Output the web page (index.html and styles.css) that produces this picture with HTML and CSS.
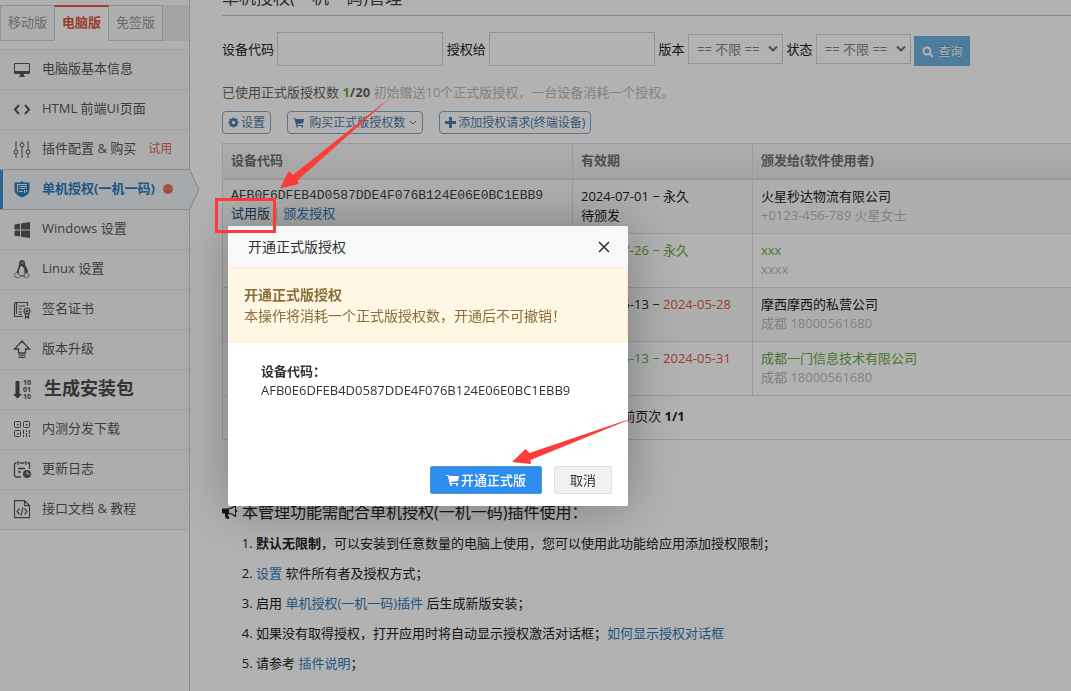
FILE: index.html
```html
<!DOCTYPE html>
<html lang="zh-CN">
<head>
<meta charset="utf-8">
<title>单机授权(一机一码)管理</title>
<link rel="stylesheet" href="styles.css">
</head>
<body>
<div class="page">
  <aside class="sidebar">
    <nav class="tabs">
      <a class="tab" href="#">移动版</a>
      <a class="tab tab-active" href="#">电脑版</a>
      <a class="tab" href="#">免签版</a>
    </nav>
    <ul class="menu">
      <li class="menu-item"><a class="menu-link" href="#">
        <svg class="menu-icon" viewBox="0 0 18 18"><path fill="currentColor" fill-rule="evenodd" d="M2 3h14a1 1 0 0 1 1 1v9a1 1 0 0 1-1 1h-5v2h1v1H6v-1h1v-2H2a1 1 0 0 1-1-1V4a1 1 0 0 1 1-1zm0 1v7h14V4z"/></svg>
        <span>电脑版基本信息</span></a></li>
      <li class="menu-item"><a class="menu-link" href="#">
        <svg class="menu-icon" viewBox="0 0 18 18"><path fill="none" stroke="currentColor" stroke-width="2" d="M6 5L2 9.500l4 4.500M12 5l4 4.500L12 14"/></svg>
        <span>HTML 前端UI页面</span></a></li>
      <li class="menu-item"><a class="menu-link" href="#">
        <svg class="menu-icon" viewBox="0 0 18 18"><g fill="none" stroke="currentColor"><path d="M3 1v9M3 14v4M9 1v2M9 7v11M15 1v9M15 14v4"/><circle cx="3" cy="12" r="2"/><circle cx="9" cy="5" r="2"/><circle cx="15" cy="12" r="2"/></g></svg>
        <span>插件配置 &amp; 购买</span><span class="trial">试用</span></a></li>
      <li class="menu-item menu-active"><a class="menu-link" href="#">
        <svg class="menu-icon" viewBox="0 0 18 18"><path fill="currentColor" d="M9 1l2 1.500h5.500V10c0 3-2.500 5.500-7.500 7.500-5-2-7.500-4.500-7.500-7.500V2.500H7z"/><path fill="none" stroke="#eef4f8" d="M4 4.500h9.500M4.500 5V12.500M6.500 6.500h5.500M6.500 8.500H12M6 11.500h4M13 4.500v4M11.500 10v3M13.500 10v2"/></svg>
        <span>单机授权(一机一码)</span><i class="dot"></i></a>
        <svg class="menu-pointer" viewBox="0 0 11 41"><path class="pointer-shape" d="M0 0.500h.5L10 20.500.5 40.500H0"/></svg></li>
      <li class="menu-item"><a class="menu-link" href="#">
        <svg class="menu-icon" viewBox="0 0 18 18"><path fill="currentColor" d="M1.500 4.500l5.500-.9V9.500H1.500zM8 3.400L17 2v7.500H8zM1.500 10.500H7v6l-5.500-.8zM8 10.500h9V18l-9-1.300z"/></svg>
        <span>Windows 设置</span></a></li>
      <li class="menu-item"><a class="menu-link" href="#">
        <svg class="menu-icon" viewBox="0 0 18 18"><path fill="currentColor" d="M9 0c2.200 0 3 1.600 3 4 0 2 3 4.500 3 8l-1.500 2-2-1-.5 3.500H7.500l-1-3.500-1.500.5H3.500c0-3 2.500-6 2.500-9.500 0-2.400.8-4 3-4z"/><path class="cutout" d="M8.500 6c1 0 3 2 3 5.500 0 2.500-1 4-2.500 4s-3-1.500-3-4S7.500 6 8.500 6z"/><path class="cutout-outline" d="M3.500 12.500L1 15l1 2 4 .8 1.500-1.800zM13.500 13l3.500 2.500-3.500 2.300-2-.8v-3z"/><path stroke="#f8f8f8" d="M7.500 3h1M9.500 3h1"/></svg>
        <span>Linux 设置</span></a></li>
      <li class="menu-item"><a class="menu-link" href="#">
        <svg class="menu-icon" viewBox="0 0 18 18"><g fill="none" stroke="currentColor" stroke-width="1.200"><path d="M14.500 6V2.500h-11Q1.500 2 1.500 4v12.500h8.500M3.500 2.500V14M5.500 6h6.500M5.500 9H9M5.500 12H9M5.500 14.500H9"/><circle cx="14" cy="11" r="3"/><circle cx="14" cy="11" r="1"/><path d="M12.500 13.500V18l1.500-1.500 1.500 1.500v-4.500"/></g></svg>
        <span>签名证书</span></a></li>
      <li class="menu-item"><a class="menu-link" href="#">
        <svg class="menu-icon" viewBox="0 0 18 18"><path fill="none" stroke="currentColor" stroke-width="1.300" d="M9 1L1.500 9H5.500v4h7V9h4zM5.500 15.200h7M5.500 17.300h7"/></svg>
        <span>版本升级</span></a></li>
      <li class="menu-item menu-build"><a class="menu-link" href="#">
        <svg class="menu-icon" viewBox="0 0 18 18"><path fill="currentColor" d="M2.500 1h4v13H9l-4.500 4.500L0 14h2.500z"/><g class="binary"><text x="10" y="5">10</text><text x="10" y="12">01</text><text x="10" y="19">10</text></g></svg>
        <span>生成安装包</span></a></li>
      <li class="menu-item"><a class="menu-link" href="#">
        <svg class="menu-icon" viewBox="0 0 18 18"><g fill="none" stroke="currentColor"><rect x="1.500" y="1.500" width="6" height="6" rx="1"/><rect x="10.500" y="1.500" width="6" height="6" rx="1"/><rect x="1.500" y="10.500" width="6" height="6" rx="1"/><path d="M10.500 10v4M10.500 15v2M13.500 10v2M13.500 13v4M16.500 10v4M16.500 15v2"/></g><path fill="currentColor" d="M4 4h1.500v1.500H4zM13 4h1.500v1.500H13zM4 13h1.500v1.500H4z"/></svg>
        <span>内测分发下载</span></a></li>
      <li class="menu-item"><a class="menu-link" href="#">
        <svg class="menu-icon" viewBox="0 0 18 18"><path fill="none" stroke="currentColor" stroke-width="1.300" d="M8 17H3.500Q1.500 17 1.500 15V4Q1.500 3 2.500 3h1M6.500 3h5M14.500 3h2v6M5 1v4M13 1v4M5 8.500h7M5 12h3"/><circle cx="14" cy="14" r="4" fill="currentColor"/><path fill="none" stroke="#f8f8f8" d="M14 11.500V14h2.500"/></svg>
        <span>更新日志</span></a></li>
      <li class="menu-item"><a class="menu-link" href="#">
        <svg class="menu-icon" viewBox="0 0 18 18"><path fill="none" stroke="currentColor" stroke-width="1.200" d="M1.500.6h10l5 5v12H1.500zM11.500.6v5h5M6.500 8.500L4 11.500l2.500 3M11.500 8.500l2.500 3-2.500 3M10 7.500l-2 8"/></svg>
        <span>接口文档 &amp; 教程</span></a></li>
    </ul>
  </aside>

  <main class="content">
    <h1 class="page-title">单机授权(一机一码)管理</h1>
    <form class="filters">
      <label for="device">设备代码</label>
      <input class="field" id="device" type="text">
      <label for="owner">授权给</label>
      <input class="field" id="owner" type="text">
      <label for="edition">版本</label>
      <span class="select-wrap"><select class="select" id="edition"><option>== 不限 ==</option></select><svg class="select-arrow" viewBox="0 0 10 8"><path d="M1 1.500l4 4 4-4"/></svg></span>
      <label for="state">状态</label>
      <span class="select-wrap"><select class="select" id="state"><option>== 不限 ==</option></select><svg class="select-arrow" viewBox="0 0 10 8"><path d="M1 1.500l4 4 4-4"/></svg></span>
      <button class="search" type="button"><svg class="search-icon" viewBox="0 0 12 12"><path fill="none" stroke="currentColor" stroke-width="2" d="M8.500 5a3.500 3.500 0 1 1-7 0 3.500 3.500 0 0 1 7 0zM7.500 7.500l3.500 3.500"/></svg>查询</button>
    </form>
    <p class="usage">已使用正式版授权数 <b><span class="ok">1</span>/20</b> <span class="hint">初始赠送10个正式版授权，一台设备消耗一个授权。</span></p>
    <div class="actions">
      <button class="action" type="button"><svg class="action-icon" viewBox="0 0 12 12"><circle cx="6" cy="6" r="3.200" fill="none" stroke="currentColor" stroke-width="2.600"/><path stroke="currentColor" stroke-width="2.200" d="M6 .5v2M6 9.500v2M.5 6h2M9.500 6h2M2.100 2.100l1.400 1.400M8.500 8.500l1.400 1.400M2.100 9.900l1.400-1.400M8.500 3.500l1.400-1.400"/></svg>设置</button>
      <button class="action" type="button"><svg class="action-icon" viewBox="0 0 13 12"><path fill="currentColor" d="M0 1h2.800l.3 1H13l-1 5-7.500 1 .2 1H12v1H3.700L2 2H0z"/><circle cx="5" cy="11" r="1" fill="currentColor"/><circle cx="11" cy="11" r="1" fill="currentColor"/></svg>&nbsp;购买正式版授权数<svg class="caret" viewBox="0 0 8 6"><path d="M1 1l3 3 3-3"/></svg></button>
      <button class="action" type="button"><svg class="action-icon" viewBox="0 0 10 10"><path stroke="currentColor" stroke-width="2.600" d="M5 0v10M0 5h10"/></svg>添加授权请求(终端设备)</button>
    </div>
    <table class="licenses">
      <thead>
        <tr><th class="col-device">设备代码</th><th class="col-period">有效期</th><th>颁发给(软件使用者)</th></tr>
      </thead>
      <tbody>
        <tr><td><span class="code">AFB0E6DFEB4D0587DDE4F076B124E06E0BC1EBB9</span><a class="edition" href="#">试用版</a><span class="sep">|</span><a class="link" href="#">颁发授权</a></td><td>2024-07-01 − 永久<br>待颁发</td><td>火星秒达物流有限公司<br><span class="hint">+0123-456-789 火星女士</span></td></tr>
        <tr><td></td><td class="ok">2024-07-26 − 永久</td><td><span class="ok">xxx</span><br><span class="hint">xxxx</span></td></tr>
        <tr><td></td><td>2024-05-13 − <span class="expired">2024-05-28</span></td><td>摩西摩西的私营公司<br><span class="hint">成都 18000561680</span></td></tr>
        <tr><td></td><td class="ok">2024-05-13 − <span class="expired">2024-05-31</span></td><td><span class="ok">成都一门信息技术有限公司</span><br><span class="hint">成都 18000561680</span></td></tr>
      </tbody>
      <tfoot><tr><td colspan="3">当前页次 <b>1/1</b></td></tr></tfoot>
    </table>
    <section class="notes">
      <h2 class="notes-title"><svg class="horn" viewBox="0 0 16 14"><path fill="currentColor" fill-rule="evenodd" d="M0 4.500Q0 3.500 1 3.500h5Q10 3 13 0h1v4.500l1.500 1.500L14 7.500V12h-1Q10 9 6.500 8.700q-1 1.500.5 3.300l.5 1.500q-2 .8-3.500 0Q2.500 11 3 8.500H1q-1 0-1-1zM7 4.300v3.400q3 .3 6 2.800v-9Q10 4 7 4.300z"/></svg>本管理功能需配合单机授权(一机一码)插件使用：</h2>
      <ol class="note-list">
        <li><b>默认无限制</b>，可以安装到任意数量的电脑上使用，您可以使用此功能给应用添加授权限制；</li>
        <li><a class="link" href="#">设置</a> 软件所有者及授权方式；</li>
        <li>启用 <a class="link" href="#">单机授权(一机一码)插件</a> 后生成新版安装；</li>
        <li>如果没有取得授权，打开应用时将自动显示授权激活对话框；<a class="link" href="#">如何显示授权对话框</a></li>
        <li>请参考 <a class="link" href="#">插件说明</a>；</li>
      </ol>
    </section>
  </main>
</div>

<div class="shade"></div>

<div class="dialog" role="dialog" aria-labelledby="dialog-title">
  <header class="dialog-head">
    <span id="dialog-title">开通正式版授权</span>
    <button class="close" type="button" aria-label="关闭"><svg class="close-icon" viewBox="0 0 12 12"><path d="M1 1l10 10M11 1L1 11"/></svg></button>
  </header>
  <div class="alert"><b>开通正式版授权</b><br>本操作将消耗一个正式版授权数，开通后不可撤销！</div>
  <div class="dialog-body"><b>设备代码：</b><br>AFB0E6DFEB4D0587DDE4F076B124E06E0BC1EBB9</div>
  <footer class="dialog-foot">
    <button class="btn btn-primary" type="button"><svg class="cart" viewBox="0 0 13 12"><path fill="currentColor" d="M0 1h2.800l.3 1H13l-1 5-7.500 1 .2 1H12v1H3.700L2 2H0z"/><circle cx="5" cy="11" r="1" fill="currentColor"/><circle cx="11" cy="11" r="1" fill="currentColor"/></svg>开通正式版</button>
    <button class="btn" type="button">取消</button>
  </footer>
</div>

<div class="marker"></div>
<svg class="arrows" width="700" height="500" viewBox="0 0 700 500"><path d="M280 188.500L288.500 171l4.500 4L391 97 298 180l.5 4zM512 462l13.500-13 4 4L637 416.500 530.500 460l.5 4z"/></svg>
</body>
</html>
```

FILE: styles.css
```css
* { box-sizing: border-box; }
body {
  margin: 0;
  overflow: hidden;
  background: #fff;
  color: #222;
  font: 13px/19px "Open Sans", "Noto Sans CJK SC", sans-serif;
}
button, input, select { font: inherit; }
a { text-decoration: none; }

.page { display: flex; min-height: 100vh; isolation: isolate; }

/* sidebar */
.sidebar {
  flex: none;
  width: 190px;
  padding-top: 5px;
  border-right: 1px solid #ccc;
  background: #fdfdfd;
}
.tabs { display: flex; height: 36px; background: #ebebeb; }
.tab {
  margin-right: -1px;
  padding: 7px;
  border: 1px solid #c5d0dc;
  background: #f9f9f9;
  color: #999;
}
.tab-active {
  z-index: 1;
  padding-top: 6px;
  border-top: 2px solid #ec5a43;
  border-bottom-color: transparent;
  background: #fff;
  color: #dd5a43;
  font-weight: 700;
}
.menu {
  margin: 8px 0 0;
  padding: 0;
  border-top: 1px solid #e5e5e5;
  list-style: none;
}
.menu-item {
  position: relative;
  height: 40px;
  border-bottom: 1px solid #e5e5e5;
  background: #f8f8f8;
}
.menu-link {
  display: flex;
  align-items: center;
  height: 37px;
  padding-left: 13px;
  color: #585858;
}
.menu-icon {
  flex: none;
  width: 18px;
  height: 18px;
  margin: 1px 11px 0 0;
  overflow: visible;
}
.cutout { fill: #f8f8f8; }
.cutout-outline { fill: #f8f8f8; stroke: #888; stroke-width: 1; }
.trial { margin-left: 12px; color: #dd6a58; font-size: 12px; }
.menu-active {
  margin-top: -1px;
  height: 41px;
  border: solid #b9cfdc;
  border-width: 1px 0;
  background: #eef4f8;
  box-shadow: inset 3px 0 #4390ce;
}
.menu-active .menu-link { color: #2b7dbc; font-weight: 700; }
.menu-pointer {
  position: absolute;
  top: -1px;
  left: 100%;
  width: 11px;
  height: 41px;
}
.pointer-shape { fill: #eef4f8; stroke: #a9c0cf; }
.dot {
  width: 10px;
  height: 10px;
  margin-left: 8px;
  border-radius: 50%;
  background: #e87461;
}
.menu-build { font-size: 18px; font-weight: 700; }
.menu-build .menu-link { color: #4c4c4c; }
.menu-build .menu-icon { margin-right: 13px; }
.binary { fill: currentColor; font: 700 7px "Open Sans", sans-serif; }

/* content */
.content { flex: 1; min-width: 0; padding-left: 32px; }
.page-title {
  margin: -16px 0 0;
  padding-bottom: 3px;
  border-bottom: 1px solid #c8c8c8;
  font-size: 17px;
  font-weight: 400;
  line-height: 28px;
  color: #444;
}
.filters { padding-top: 16px; white-space: nowrap; }
.filters label { vertical-align: middle; }
.field {
  width: 166px;
  height: 34px;
  border: 1px solid #d5d5d5;
  background: #fff;
  vertical-align: middle;
}
.select-wrap { position: relative; display: inline-block; vertical-align: middle; }
.select {
  display: block;
  width: 95px;
  height: 30px;
  padding: 0 8px;
  appearance: none;
  border: 1px solid #d5d5d5;
  border-radius: 0;
  background: #fff;
  color: #858585;
}
.select-arrow {
  position: absolute;
  top: 11px;
  right: 5px;
  width: 10px;
  height: 8px;
  fill: none;
  stroke: #777;
  stroke-width: 2;
  pointer-events: none;
}
.search {
  height: 30px;
  margin-top: 4px;
  padding: 0 8px;
  border: 0;
  background: #6fb3e0;
  color: #fff;
  font-size: 12px;
  text-shadow: 0 -1px 0 rgba(0, 0, 0, .25);
  vertical-align: middle;
}
.search-icon { width: 12px; height: 12px; margin-right: 4px; vertical-align: -2px; }
.usage { margin: 17px 0 0; color: #666; }
.hint { color: #bbb; }
.actions { display: flex; gap: 16px; padding: 9px 0; }
.action {
  display: flex;
  align-items: center;
  height: 23px;
  padding: 0 5px;
  border: 1px solid #7fa9cf;
  border-radius: 4px;
  background: #fff;
  color: #4f7ba5;
  font-size: 12px;
  line-height: 18px;
}
.action-icon { width: 11px; height: 11px; margin-right: 2px; overflow: visible; }
.caret {
  width: 8px;
  height: 6px;
  margin-left: 4px;
  fill: none;
  stroke: currentColor;
}

.licenses {
  width: 100%;
  table-layout: fixed;
  border-collapse: separate;
  border-spacing: 0;
  border: solid #ddd;
  border-width: 1px 0 0 1px;
}
.licenses th {
  height: 36px;
  padding: 0 8px 1px;
  border-bottom: 2px solid #ddd;
  background: linear-gradient(#f8f8f8, #ececec);
  color: #707070;
  text-align: left;
}
.col-device { width: 349px; }
.col-period { width: 180px; }
.licenses td {
  height: 54px;
  padding: 7px 8px;
  border-bottom: 1px solid #ddd;
  vertical-align: top;
}
.licenses th + th, .licenses td + td { border-left: 1px solid #ddd; }
.licenses tbody tr:nth-child(odd) { background: #f9f9f9; }
.licenses tfoot td { height: 44px; padding-top: 11px; text-align: center; }
.code {
  display: block;
  color: #444;
  font-family: "Liberation Mono", monospace;
  line-height: 17px;
}
.edition { color: #1c4a70; }
.sep { margin: 0 3px; color: #ccc; }
.link { color: #337ab7; }
.ok { color: #69aa46; }
.expired { color: #dd5a43; }

.notes { padding-top: 60px; }
.notes-title {
  display: flex;
  align-items: center;
  margin: 0;
  font-size: 16px;
  font-weight: 400;
  line-height: 24px;
}
.horn { width: 16px; height: 14px; margin-right: 4px; }
.note-list { margin: 4px 0 0; padding-left: 34px; line-height: 30px; }

/* modal */
.shade { position: fixed; inset: 0; background: rgba(0, 0, 0, .3); }
.dialog {
  position: absolute;
  top: 226px;
  left: 228px;
  width: 400px;
  border-radius: 2px;
  background: #fff;
  box-shadow: 1px 1px 50px rgba(0, 0, 0, .3);
  color: #333;
}
.dialog-head {
  display: flex;
  align-items: center;
  justify-content: space-between;
  height: 41px;
  padding: 0 18px 0 20px;
  border-radius: 2px 2px 0 0;
  background: #f8f8f8;
  font-size: 14px;
}
.close { display: flex; padding: 0; border: 0; background: none; }
.close-icon { width: 12px; height: 12px; fill: none; stroke: #2e2d3c; stroke-width: 1.5; }
.alert {
  padding: 16px 16px 15px;
  border: 1px solid #faebcc;
  border-left: 0;
  background: #fef7e3;
  color: #8a6d3b;
  font-size: 14px;
  line-height: 21px;
}
.dialog-body { padding: 20px 33px 66px; }
.dialog-foot { display: flex; justify-content: flex-end; gap: 12px; padding: 0 16px 12px; }
.btn {
  display: flex;
  align-items: center;
  height: 28px;
  padding: 0 15px;
  border: 1px solid #dedede;
  border-radius: 2px;
  background: #f1f1f1;
  color: #333;
}
.btn-primary { border-color: #4898d5; background: #2e8ded; color: #fff; font-weight: 500; }
.cart { width: 13px; height: 12px; margin-right: 2px; }

/* annotations */
.marker {
  position: absolute;
  top: 198px;
  left: 215px;
  width: 61px;
  height: 35px;
  border: 3px solid #fd3c39;
}
.arrows { position: absolute; top: 0; left: 0; fill: #fd3c39; pointer-events: none; }
```
